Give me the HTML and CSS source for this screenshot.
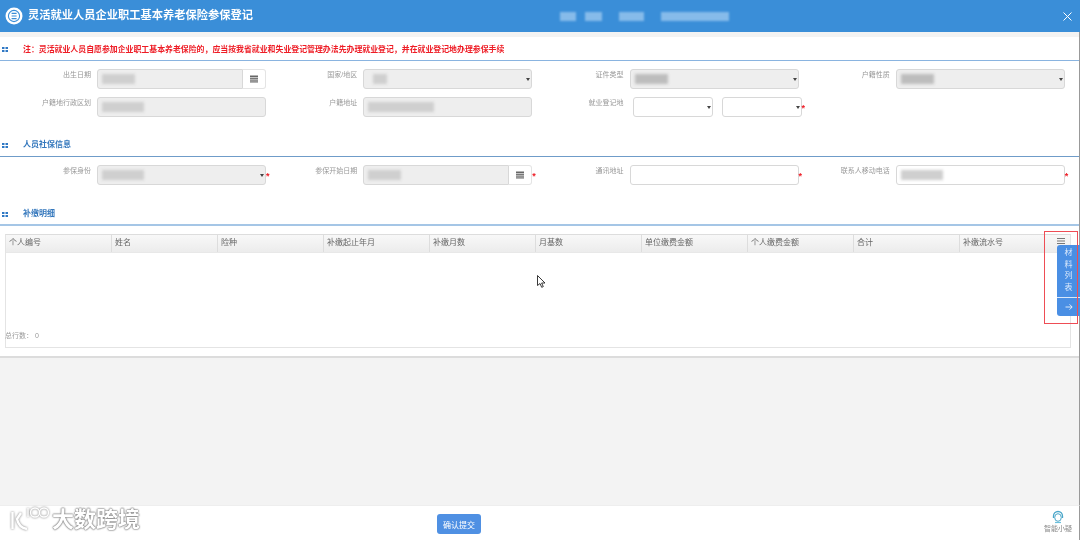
FILE: index.html
```html
<!DOCTYPE html>
<html lang="zh">
<head>
<meta charset="utf-8">
<title>灵活就业人员企业职工基本养老保险参保登记</title>
<link rel="stylesheet" href="styles.css">
</head>
<body>
<div class="app">
  <header class="topbar">
    <svg class="top-icon" width="18" height="18" viewBox="0 0 18 18"><circle cx="9" cy="9" r="8.5" fill="#fff"/><circle cx="9" cy="9" r="5.6" fill="none" stroke="#3a8ed8" stroke-width="1.1"/><path d="M6.6 6.4h5M6.6 9h5M6.6 11.6h5" stroke="#3a8ed8" stroke-width="1.2"/></svg>
    <h1 class="top-title">灵活就业人员企业职工基本养老保险参保登记</h1>
    <div class="top-blots"><i class="tb tb1"></i><i class="tb tb2"></i><i class="tb tb3"></i><i class="tb tb4"></i></div>
    <svg class="top-close" width="9" height="9" viewBox="0 0 9 9"><path d="M.5.5l8 8M8.500.5l-8 8" stroke="#fff" stroke-width="1"/></svg>
  </header>

  <main class="content">
    <div class="panel">
      <div class="notice">
        <svg class="sec-mark" width="6" height="6" viewBox="0 0 6 6"><path d="M0 1h2.500v2H0zM3.500 1H6v2H3.500zM0 4h2.500v2H0zM3.500 4H6v2H3.500z" fill="#2f78c4"/></svg>
        <p class="notice-text">注：灵活就业人员自愿参加企业职工基本养老保险的，应当按我省就业和失业登记管理办法先办理就业登记，并在就业登记地办理参保手续</p>
      </div>

      <div class="form form-a">
        <div class="field"><label class="lbl">出生日期</label>
          <div class="ctl ctl-date"><div class="box off"><i class="blot w33"></i></div><span class="cal"><svg width="8" height="8" viewBox="0 0 8 8"><path d="M0 .5h8v7H0z" fill="#666"/><path d="M0 2.500h8M0 4.300h8M0 6h8" stroke="#eee" stroke-width=".7"/></svg></span></div></div>
        <div class="field"><label class="lbl">国家/地区</label>
          <div class="ctl"><div class="box off sel"><i class="blot w16"></i></div></div></div>
        <div class="field"><label class="lbl">证件类型</label>
          <div class="ctl"><div class="box off sel"><i class="blot w33 dark"></i></div></div></div>
        <div class="field"><label class="lbl">户籍性质</label>
          <div class="ctl"><div class="box off sel"><i class="blot w33 dark"></i></div></div></div>

        <div class="field"><label class="lbl">户籍地行政区划</label>
          <div class="ctl"><div class="box off"><i class="blot w42"></i></div></div></div>
        <div class="field"><label class="lbl">户籍地址</label>
          <div class="ctl"><div class="box off"><i class="blot w66"></i></div></div></div>
        <div class="field"><label class="lbl">就业登记地</label>
          <div class="ctl ctl-pair"><div class="box sel"></div><div class="box sel"></div><b class="star star-pair">*</b></div></div>
      </div>

      <div class="section sec-b">
        <svg class="sec-mark" width="6" height="6" viewBox="0 0 6 6"><path d="M0 1h2.500v2H0zM3.500 1H6v2H3.500zM0 4h2.500v2H0zM3.500 4H6v2H3.500z" fill="#2f78c4"/></svg>
        <h2 class="sec-title">人员社保信息</h2>
      </div>
      <div class="form form-b">
        <div class="field"><label class="lbl">参保身份</label>
          <div class="ctl"><div class="box off sel"><i class="blot w42"></i></div><b class="star">*</b></div></div>
        <div class="field"><label class="lbl">参保开始日期</label>
          <div class="ctl ctl-date"><div class="box off"><i class="blot w33"></i></div><span class="cal"><svg width="8" height="8" viewBox="0 0 8 8"><path d="M0 .5h8v7H0z" fill="#666"/><path d="M0 2.500h8M0 4.300h8M0 6h8" stroke="#eee" stroke-width=".7"/></svg></span><b class="star">*</b></div></div>
        <div class="field"><label class="lbl">通讯地址</label>
          <div class="ctl"><div class="box"></div><b class="star">*</b></div></div>
        <div class="field"><label class="lbl">联系人移动电话</label>
          <div class="ctl"><div class="box"><i class="blot w42"></i></div><b class="star">*</b></div></div>
      </div>

      <div class="section sec-c">
        <svg class="sec-mark" width="6" height="6" viewBox="0 0 6 6"><path d="M0 1h2.500v2H0zM3.500 1H6v2H3.500zM0 4h2.500v2H0zM3.500 4H6v2H3.500z" fill="#2f78c4"/></svg>
        <h2 class="sec-title">补缴明细</h2>
      </div>

      <div class="table">
        <div class="thead">
          <span class="th">个人编号</span><span class="th">姓名</span><span class="th">险种</span><span class="th">补缴起止年月</span><span class="th">补缴月数</span><span class="th">月基数</span><span class="th">单位缴费金额</span><span class="th">个人缴费金额</span><span class="th">合计</span><span class="th">补缴流水号</span>
          <span class="th-menu"><svg width="8" height="6" viewBox="0 0 8 6"><path d="M0 .5h8M0 3h8M0 5.500h8" stroke="#777" stroke-width="1"/></svg></span>
        </div>
        <div class="tbody"></div>
        <div class="tfoot">总行数： 0</div>
      </div>
    </div>
  </main>

  <footer class="footer">
    <div class="mark">
      <svg class="mark-logo" width="42" height="26" viewBox="0 0 42 26"><g fill="none" stroke="#fff" stroke-width="2.400"><path d="M3.500 6v17M12 7L8 13c1 5 4 9 10 10"/></g><g fill="none" stroke="#fff" stroke-width="1.300"><path d="M19 2v9"/><circle cx="26" cy="6.500" r="4.500"/><circle cx="35" cy="6.500" r="4.500"/></g></svg>
      <span class="mark-text">大数跨境</span>
    </div>
    <button class="submit" type="button">确认提交</button>
    <div class="helper">
      <svg width="14" height="14" viewBox="0 0 14 14"><path d="M2.500 8V6a4.500 4.500 0 0 1 9 0v2" fill="none" stroke="#4aa6c9" stroke-width="1.300"/><ellipse cx="7" cy="7.500" rx="3.300" ry="3.800" fill="none" stroke="#4aa6c9" stroke-width="1"/><path d="M4 12.500h6" stroke="#6cc0dc" stroke-width="1.200"/></svg>
      <span class="helper-text">智能小疑</span>
    </div>
  </footer>

  <aside class="side">
    <span class="side-text">材</span><span class="side-text">料</span><span class="side-text">列</span><span class="side-text">表</span>
    <hr class="side-rule">
    <svg width="8" height="8" viewBox="0 0 8 8"><path d="M.5 4h6.500M4.500 1.300L7.200 4 4.500 6.700" fill="none" stroke="#fff" stroke-width=".8"/></svg>
  </aside>
  <div class="callout"></div>
  <svg class="cursor" width="9" height="13" viewBox="0 0 9 13"><path d="M.5.500v10l2.500-2 1.700 3.800 1.600-.7L4.600 8h3.400z" fill="#fff" stroke="#222" stroke-width=".9"/></svg>
</div>
</body>
</html>
```
FILE: styles.css
```css
* { box-sizing: border-box; }
html, body { margin: 0; height: 100%; }
body {
  font-family: "Liberation Sans", "Noto Sans CJK SC", sans-serif;
  background: #fff;
  overflow: hidden;
}
.app {
  position: relative;
  width: 1080px;
  height: 540px;
  display: flex;
  flex-direction: column;
  overflow: hidden;
  filter: blur(0.4px);
}
.topbar {
  height: 32px;
  flex: none;
  background: #3a8ed8;
  display: flex;
  align-items: center;
  padding: 0 8px 0 5px;
  color: #fff;
}
.top-icon { flex: none; }
.top-title {
  margin: 0 0 0 5px;
  font-size: 11.25px;
  font-weight: 700;
  line-height: 1;
  white-space: nowrap;
  width: 532px;
}
.top-blots { display: flex; align-items: center; flex: 1; }
.tb { display: block; height: 9px; background: #86bbea; filter: blur(1.2px); }
.tb1 { width: 16px; }
.tb2 { width: 17px; margin-left: 9px; }
.tb3 { width: 25px; margin-left: 17px; }
.tb4 { width: 68px; margin-left: 17px; }
.top-close { flex: none; }

.content {
  flex: 1;
  min-height: 0;
  background: #f3f3f3;
  padding-top: 5px;
  border-right: 1px solid #999;
}
.panel {
  background: #fff;
  height: 321px;
  border-bottom: 2px solid #dcdcdc;
  display: flex;
  flex-direction: column;
}
.notice {
  height: 24px;
  flex: none;
  display: flex;
  align-items: center;
  border-bottom: 1px solid #8ab4e0;
  padding-left: 2px;
}
.sec-mark { flex: none; }
.notice-text {
  margin: 0 0 0 15px;
  font-size: 7.900px;
  font-weight: 700;
  color: #ee1c25;
  white-space: nowrap;
}
.form {
  display: grid;
  grid-template-columns: repeat(4, 266.25px);
  flex: none;
}
.form-a { padding-top: 8px; grid-auto-rows: 28px; }
.form-b { padding-top: 8px; grid-auto-rows: 21px; }
.field {
  display: grid;
  grid-template-columns: 91px 169px;
  column-gap: 6px;
  align-items: start;
}
.lbl {
  font-size: 7px;
  line-height: 9px;
  padding-top: 1px;
  color: #999;
  text-align: right;
  white-space: nowrap;
}
.ctl {
  position: relative;
  display: flex;
  height: 20px;
}
.box {
  position: relative;
  flex: 1;
  min-width: 0;
  background: #fff;
  border: 1px solid #d8d8d8;
  border-radius: 3px;
  display: flex;
  align-items: center;
  padding-left: 4px;
}
.box.off { background: #eee; }
.box.sel::after {
  content: "";
  position: absolute;
  right: 1px;
  top: 8px;
  border: 2px solid transparent;
  border-top: 3px solid #444;
  border-bottom: 0;
}
.ctl-date .box { border-radius: 3px 0 0 3px; }
.cal {
  flex: none;
  width: 23px;
  background: #fff;
  border: 1px solid #e4e4e4;
  border-left: 0;
  border-radius: 0 3px 3px 0;
  display: flex;
  align-items: center;
  justify-content: center;
}
.ctl-pair { gap: 9px; margin-left: 3px; margin-right: -3px; }
.star {
  position: absolute;
  left: 100%;
  top: 6px;
  margin-left: 0;
  color: #ee1c25;
  font-size: 9px;
  line-height: 11px;
  font-weight: 700;
}
.blot { display: block; height: 10px; background: #cfcfcf; filter: blur(1.400px); }
.blot.dark { background: #bdbdbd; }
.w16 { width: 14px; margin-left: 5px; }
.w33 { width: 33px; }
.w42 { width: 42px; }
.w66 { width: 66px; }
.section {
  flex: none;
  display: flex;
  align-items: center;
  padding-left: 2px;
}
.sec-b { height: 32px; padding-top: 8px; border-bottom: 1px solid #6f9cc9; }
.sec-c { height: 40px; padding-top: 17px; border-bottom: 2px solid #a5c6e6; }
.sec-title {
  margin: 0 0 0 15px;
  font-size: 8px;
  line-height: 1;
  font-weight: 700;
  color: #3578bd;
}
.table {
  flex: none;
  margin: 8px 8px 0 5px;
  height: 114px;
  border: 1px solid #e4e4e4;
  border-top-color: #ddd;
  display: flex;
  flex-direction: column;
}
.thead {
  height: 18px;
  flex: none;
  display: grid;
  grid-template-columns: repeat(9, 106px) 97px 1fr;
  background: linear-gradient(#f8f8f8, #ececec);
  border-bottom: 1px solid #e8e8e8;
}
.th {
  font-size: 8px;
  line-height: 16px;
  padding-left: 3px;
  color: #666;
  border-right: 1px solid #ddd;
  white-space: nowrap;
}
.th:nth-child(10) { border-right: 0; }
.th-menu { display: flex; justify-content: flex-start; padding-top: 3px; }
.tbody { flex: 1; }
.tfoot {
  height: 16px;
  font-size: 7px;
  color: #999;
  line-height: 9px;
  margin-left: -1px;
}
.footer {
  height: 35px;
  flex: none;
  background: #fff;
  display: grid;
  grid-template-columns: 437px 44px 1fr auto;
  position: relative;
  border-top: 1px solid #eee;
  border-right: 1px solid #999;
}
.mark {
  display: flex;
  align-items: flex-start;
  padding: 0 0 0 9px;
  gap: 1px;
}
.mark-logo { filter: drop-shadow(0 0 1px #777); flex: none; }
.mark-text {
  font-size: 22px;
  line-height: 28px;
  font-weight: 700;
  color: #fff;
  text-shadow: 0 0 1.500px #777, 0 0 1.500px #777, 0 0 2px #999;
  white-space: nowrap;
}
.submit {
  margin: 8px 0 0;
  height: 20px;
  padding: 0;
  border: 0;
  border-radius: 3px;
  background: #4f90e3;
  color: #fff;
  font: 8px "Liberation Sans", "Noto Sans CJK SC", sans-serif;
}
.helper {
  grid-column: 4;
  display: flex;
  flex-direction: column;
  align-items: center;
  padding: 4px 7px 0 0;
}
.helper-text { font-size: 7px; line-height: 9px; color: #888; white-space: nowrap; }
.side {
  position: absolute;
  right: 0;
  top: 245px;
  width: 23px;
  height: 71px;
  background: #4a8fe4;
  border-radius: 3px 0 0 3px;
  display: flex;
  flex-direction: column;
  align-items: center;
  padding-top: 2px;
}
.side-text { font-size: 8px; line-height: 11.700px; color: #d9e8fb; }
.side-rule { width: 100%; margin: 3px 0 5px; border: 0; border-top: 1px solid #dbe8fa; }
.callout {
  position: absolute;
  left: 1044px;
  top: 231px;
  width: 34px;
  height: 93px;
  border: 1px solid #ee4d55;
}
.cursor { position: absolute; left: 537px; top: 275px; }
```
